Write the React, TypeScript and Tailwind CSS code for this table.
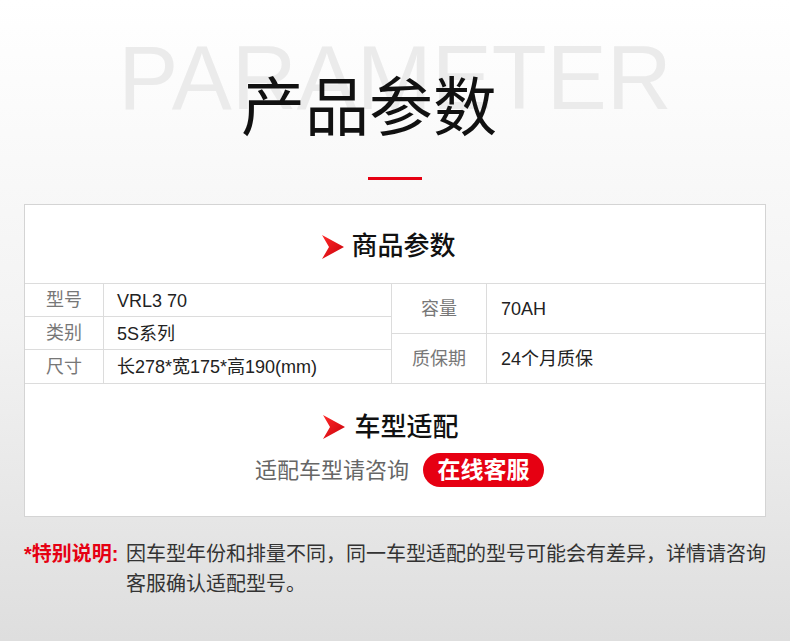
const cjk = { fontFamily: '"Liberation Sans", "Noto Sans CJK SC", sans-serif' };

const Arrow = () => (
	<svg width="22" height="24" viewBox="0 0 22 24" className="shrink-0">
		<defs>
			<linearGradient id="arrowGrad" x1="0" y1="0" x2="1" y2="1">
				<stop offset="0" stopColor="#ff2a2a" />
				<stop offset="1" stopColor="#c8000a" />
			</linearGradient>
		</defs>
		<path d="M0 0 L22 12 L0 24 L7 12 Z" fill="url(#arrowGrad)" />
	</svg>
);

const leftRows = [
	{ label: '型号', value: 'VRL3 70' },
	{ label: '类别', value: '5S系列' },
	{ label: '尺寸', value: '长278*宽175*高190(mm)' },
];

const rightRows = [
	{ label: '容量', value: '70AH' },
	{ label: '质保期', value: '24个月质保' },
];

export default function App() {
	return (
		<div className="w-full h-[641px] overflow-hidden bg-gradient-to-b from-[#ffffff] via-[#f3f3f3] to-[#dedede]" style={cjk}>
			{/* HEADER */}
			<div className="relative h-[204px]">
				<div className="absolute left-0 right-0 top-[33px] text-center text-[90px] leading-[90px] text-[#ebebeb]">
					PARAMETER
				</div>
				<div className="relative pt-[68px] flex flex-col items-center">
					<h1 className="pr-[52px] text-[64px] leading-[80px] font-normal text-[#111]">产品参数</h1>
					<div className="mt-[29px] w-[54px] h-[3px] bg-[#e60012]" />
				</div>
			</div>

			{/* CARD */}
			<div className="mx-[24px] bg-white border border-[#d4d4d4]">
				<div className="h-[78px] flex items-center justify-center gap-[7px] pt-[5px] pr-[12px]">
					<Arrow />
					<span className="text-[26px] font-medium text-[#111]">商品参数</span>
				</div>

				<div className="flex border-t border-[#dcdcdc] text-[18px]">
					<div className="w-[367px] border-r border-[#dcdcdc]">
						{leftRows.map((row, i) => (
							<div key={row.label} className={`flex h-[33px] ${i < 2 ? 'border-b border-[#dcdcdc]' : ''}`}>
								<div className="w-[79px] border-r border-[#dcdcdc] flex items-center justify-center pt-[1px] text-[#777]">{row.label}</div>
								<div className="flex-1 flex items-center pl-[13px] pt-[2px] text-[#222]">{row.value}</div>
							</div>
						))}
					</div>
					<div className="flex-1">
						{rightRows.map((row, i) => (
							<div key={row.label} className={`flex h-[49.5px] ${i < 1 ? 'border-b border-[#dcdcdc]' : ''}`}>
								<div className="w-[95px] border-r border-[#dcdcdc] flex items-center justify-center pt-[2px] text-[#777]">{row.label}</div>
								<div className="flex-1 flex items-center pl-[14px] pt-[2px] text-[#222]">{row.value}</div>
							</div>
						))}
					</div>
				</div>

				<div className="h-[133px] border-t border-[#dcdcdc] flex flex-col items-center pt-[28px]">
					<div className="flex items-center gap-[9px] pr-[8px]">
						<Arrow />
						<span className="text-[26px] leading-[30px] font-medium text-[#111]">车型适配</span>
					</div>
					<div className="mt-[11px] pl-[9px] flex items-center gap-[14px]">
						<span className="text-[22px] text-[#666]">适配车型请咨询</span>
						<button className="w-[121px] h-[34px] rounded-full bg-[#e60012] text-white text-[23px] font-bold leading-none flex items-center justify-center">
							在线客服
						</button>
					</div>
				</div>
			</div>

			{/* NOTE */}
			<div className="mt-[22px] ml-[24px] flex text-[20px] leading-[30px]">
				<span className="w-[102px] shrink-0 font-bold text-[#e60012]">*特别说明:</span>
				<p className="text-[#333]">
					因车型年份和排量不同，同一车型适配的型号可能会有差异，详情请咨询
					<br />
					客服确认适配型号。
				</p>
			</div>
		</div>
	);
}
